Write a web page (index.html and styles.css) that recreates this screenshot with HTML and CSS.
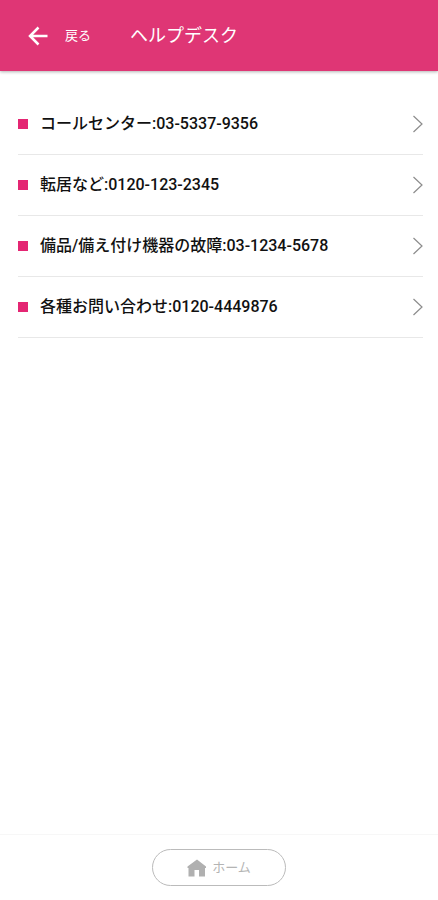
FILE: index.html
```html
<!DOCTYPE html>
<html lang="ja">
<head>
<meta charset="utf-8">
<meta name="viewport" content="width=device-width, initial-scale=1">
<title>ヘルプデスク</title>
<link rel="stylesheet" href="styles.css">
</head>
<body>
<header class="bar">
  <button class="back" type="button">
    <svg class="back-icon" viewBox="0 0 20 20" aria-hidden="true"><path d="M19.500 10H2.500M10.500 1.500L2 10l8.500 8.500"/></svg>
    <span>戻る</span>
  </button>
  <h1 class="title">ヘルプデスク</h1>
</header>
<main class="content">
  <ul class="list">
    <li><a class="row" href="tel:03-5337-9356"><span class="label">コールセンター:03-5337-9356</span><svg class="chevron" viewBox="0 0 10 18" aria-hidden="true"><path d="M.5 1l8.500 8-8.500 8"/></svg></a></li>
    <li><a class="row" href="tel:0120-123-2345"><span class="label">転居など:0120-123-2345</span><svg class="chevron" viewBox="0 0 10 18" aria-hidden="true"><path d="M.5 1l8.500 8-8.500 8"/></svg></a></li>
    <li><a class="row" href="tel:03-1234-5678"><span class="label">備品/備え付け機器の故障:03-1234-5678</span><svg class="chevron" viewBox="0 0 10 18" aria-hidden="true"><path d="M.5 1l8.500 8-8.500 8"/></svg></a></li>
    <li><a class="row" href="tel:0120-4449876"><span class="label">各種お問い合わせ:0120-4449876</span><svg class="chevron" viewBox="0 0 10 18" aria-hidden="true"><path d="M.5 1l8.500 8-8.500 8"/></svg></a></li>
  </ul>
</main>
<footer class="footer">
  <button class="home" type="button">
    <svg class="home-icon" viewBox="0 0 20 18" aria-hidden="true"><path d="M10 .5L.5 7.500V9H1.500v8.500H7.500V11h4.500v6.500H18V9h1V7.500z"/></svg>
    <span>ホーム</span>
  </button>
</footer>
</body>
</html>
```
FILE: styles.css
```css
* {
  box-sizing: border-box;
}

body {
  margin: 0;
  min-height: 100vh;
  display: flex;
  flex-direction: column;
  background: #fff;
  color: #111;
  font-family: Roboto, "Noto Sans CJK JP", sans-serif;
}

button {
  font: inherit;
  background: none;
  border: 0;
  cursor: pointer;
}

.bar {
  display: flex;
  align-items: center;
  gap: 39px;
  height: 71px;
  padding: 0 28px;
  background: #df3675;
  color: #fff;
  box-shadow: 0 1px 3px rgba(0, 0, 0, 0.3);
}

.back {
  display: flex;
  align-items: center;
  gap: 17px;
  padding: 0;
  color: #fff;
  font-size: 13px;
  line-height: 20px;
}

.back-icon {
  width: 20px;
  height: 20px;
  fill: none;
  stroke: currentColor;
  stroke-width: 2.5;
}

.title {
  margin: 0;
  font-size: 18px;
  line-height: 24px;
  font-weight: 400;
}

.content {
  flex: 1;
  padding: 23px 15px 24px 18px;
}

.list {
  margin: 0;
  padding: 0;
  list-style: none;
}

.row {
  display: flex;
  align-items: center;
  gap: 12px;
  min-height: 61px;
  border-bottom: 1px solid #e8e8e8;
  color: inherit;
  font-size: 16px;
  line-height: 24px;
  font-weight: 500;
  text-decoration: none;
}

.row::before {
  content: "";
  flex: none;
  width: 10px;
  height: 10px;
  background: #e42673;
}

.label {
  flex: 1;
}

.chevron {
  flex: none;
  width: 10px;
  height: 18px;
  fill: none;
  stroke: #8c8c8c;
  stroke-width: 1.2;
}

.footer {
  display: flex;
  justify-content: center;
  padding: 14px 16px;
  border-top: 1px solid #f7f7f7;
}

.home {
  display: flex;
  align-items: center;
  justify-content: center;
  gap: 5px;
  width: 134px;
  height: 37px;
  border: 1px solid #bbb;
  border-radius: 19px;
  color: #b4b4b4;
  font-size: 13px;
  line-height: 20px;
}

.home-icon {
  width: 20px;
  height: 18px;
  fill: #b0b0b0;
}
```
